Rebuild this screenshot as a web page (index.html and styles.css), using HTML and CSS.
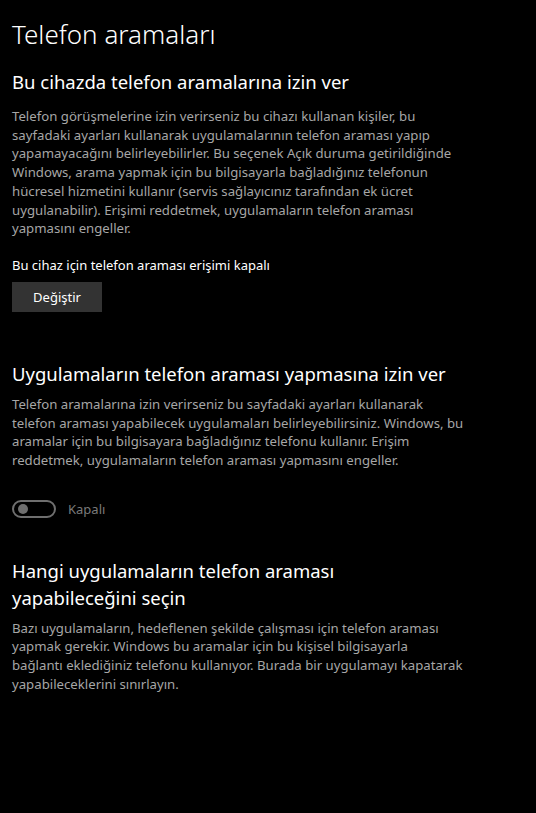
FILE: index.html
```html
<html lang="tr">

<head>
  <meta charset="UTF-8">
  <meta name="viewport" content="width=device-width, initial-scale=1.0">
  <title>Telefon aramaları</title>
  <link rel="stylesheet" href="styles.css">
</head>

<body>
  <div class="page">
    <h1 class="title">Telefon aramaları</h1>

    <div class="section first">
      <h2>Bu cihazda telefon aramalarına izin ver</h2>
      <p class="desc">Telefon görüşmelerine izin verirseniz bu cihazı kullanan kişiler, bu<br>
        sayfadaki ayarları kullanarak uygulamalarının telefon araması yapıp<br>
        yapamayacağını belirleyebilirler. Bu seçenek Açık duruma getirildiğinde<br>
        Windows, arama yapmak için bu bilgisayarla bağladığınız telefonun<br>
        hücresel hizmetini kullanır (servis sağlayıcınız tarafından ek ücret<br>
        uygulanabilir). Erişimi reddetmek, uygulamaların telefon araması<br>
        yapmasını engeller.</p>
      <p class="status">Bu cihaz için telefon araması erişimi kapalı</p>
      <button class="btn">Değiştir</button>
    </div>

    <div class="section">
      <h2>Uygulamaların telefon araması yapmasına izin ver</h2>
      <p class="desc">Telefon aramalarına izin verirseniz bu sayfadaki ayarları kullanarak<br>
        telefon araması yapabilecek uygulamaları belirleyebilirsiniz. Windows, bu<br>
        aramalar için bu bilgisayara bağladığınız telefonu kullanır. Erişim<br>
        reddetmek, uygulamaların telefon araması yapmasını engeller.</p>
      <div class="toggle-row">
        <span class="toggle"><span class="knob"></span></span>
        <span class="toggle-label">Kapalı</span>
      </div>
    </div>

    <div class="section last">
      <h2>Hangi uygulamaların telefon araması<br>yapabileceğini seçin</h2>
      <p class="desc">Bazı uygulamaların, hedeflenen şekilde çalışması için telefon araması<br>
        yapmak gerekir. Windows bu aramalar için bu kişisel bilgisayarla<br>
        bağlantı eklediğiniz telefonu kullanıyor. Burada bir uygulamayı kapatarak<br>
        yapabileceklerini sınırlayın.</p>
    </div>
  </div>
</body>

</html>
```

FILE: styles.css
```css
html,
body {
  background-color: #000;
  margin: 0;
  height: 100%;
  overflow: hidden;
}

body {
  font-family: "Noto Sans", "Open Sans", sans-serif;
  color: #fff;
}

.page {
  padding: 16px 12px 0 12px;
}

.title {
  font-size: 26px;
  font-weight: 300;
  line-height: 36px;
  margin: 0 0 17px 0;
}

h2 {
  font-size: 18.5px;
  font-weight: 400;
  line-height: 26px;
  margin: 0 0 8px 0;
}

.desc {
  font-size: 13.2px;
  line-height: 18.7px;
  color: #a6a6a6;
  margin: 0;
}

.section {
  margin-bottom: 39px;
}

.section.first {
  margin-bottom: 49px;
}

.section.first h2 {
  margin-bottom: 12px;
}

.section.last h2 {
  line-height: 27px;
}

.status {
  font-size: 13px;
  line-height: 18px;
  margin: 18px 0 8px 0;
}

.btn {
  display: block;
  width: 90px;
  height: 30px;
  background-color: #333;
  color: #fff;
  border: none;
  font-family: inherit;
  font-size: 13px;
  padding: 0;
}

.toggle-row {
  display: flex;
  align-items: center;
  margin-top: 30px;
}

.toggle {
  display: flex;
  align-items: center;
  width: 44px;
  height: 18px;
  box-sizing: border-box;
  border: 2px solid #6f6f6f;
  border-radius: 10px;
  padding-left: 4px;
}

.knob {
  width: 10px;
  height: 10px;
  border-radius: 50%;
  background-color: #6f6f6f;
}

.toggle-label {
  margin-left: 12px;
  font-size: 13px;
  color: #7a7a7a;
}
```
